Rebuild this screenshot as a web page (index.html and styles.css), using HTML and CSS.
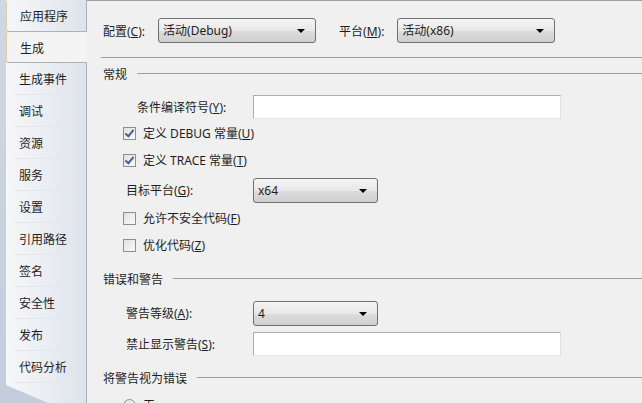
FILE: index.html
```html
<!DOCTYPE html>
<html lang="zh-CN">
<head>
  <meta charset="UTF-8" />
  <title>项目属性</title>
  <link rel="stylesheet" href="styles.css">
</head>
<body>
  <div class="sidebar">
    <ul class="tabs">
      <li class="tab">应用程序</li>
      <li class="tab active">生成</li>
      <li class="tab">生成事件</li>
      <li class="tab">调试</li>
      <li class="tab">资源</li>
      <li class="tab">服务</li>
      <li class="tab">设置</li>
      <li class="tab">引用路径</li>
      <li class="tab">签名</li>
      <li class="tab">安全性</li>
      <li class="tab">发布</li>
      <li class="tab">代码分析</li>
    </ul>
  </div>

  <div class="content">
    <div class="config-row">
      <span class="label">配置(<u>C</u>):</span>
      <div class="select wide">活动(Debug)<span class="arrow"></span></div>
      <span class="label platform">平台(<u>M</u>):</span>
      <div class="select wide">活动(x86)<span class="arrow"></span></div>
    </div>
    <div class="rule"></div>

    <div class="group-title"><span>常规</span><div class="line"></div></div>
    <div class="field">
      <span class="field-label indent-lg">条件编译符号(<u>Y</u>):</span>
      <div class="textbox"></div>
    </div>
    <label class="check"><span class="box checked"></span>定义 DEBUG 常量(<u>U</u>)</label>
    <label class="check"><span class="box checked"></span>定义 TRACE 常量(<u>T</u>)</label>
    <div class="field">
      <span class="field-label">目标平台(<u>G</u>):</span>
      <div class="select short">x64<span class="arrow"></span></div>
    </div>
    <label class="check"><span class="box"></span>允许不安全代码(<u>F</u>)</label>
    <label class="check"><span class="box"></span>优化代码(<u>Z</u>)</label>

    <div class="group-title"><span>错误和警告</span><div class="line"></div></div>
    <div class="field">
      <span class="field-label">警告等级(<u>A</u>):</span>
      <div class="select short">4<span class="arrow"></span></div>
    </div>
    <div class="field">
      <span class="field-label">禁止显示警告(<u>S</u>):</span>
      <div class="textbox"></div>
    </div>

    <div class="group-title"><span>将警告视为错误</span><div class="line"></div></div>
    <label class="check"><span class="box radio"></span>无</label>
  </div>
</body>
</html>
```

FILE: styles.css
```css
body {
  margin: 0;
  height: 403px;
  overflow: hidden;
  display: flex;
  font-family: "Noto Sans", "Noto Sans CJK SC", sans-serif;
  font-size: 12px;
  color: #1e1e1e;
  background: #f0f0f0;
}

.sidebar {
  width: 87px;
  flex: none;
  background: linear-gradient(to bottom, #cfd7e3, #c3cddb);
  padding-left: 6px;
  box-sizing: border-box;
}

.tabs {
  list-style: none;
  margin: 0;
  padding: 0 0 30px;
  width: 81px;
  height: 100%;
  box-sizing: border-box;
  background: linear-gradient(to right, #f6f7f9, #dee3eb);
  border-right: 1px solid #a9b1bf;
  clip-path: polygon(0 0, 100% 0, 100% 100%, 42px 100%, 0 calc(100% - 18px));
}

.tab {
  height: 32px;
  line-height: 28px;
  padding: 3px 0 0 13px;
  box-sizing: border-box;
  position: relative;
}

.tab::after {
  content: "";
  position: absolute;
  left: 8px;
  right: 12px;
  bottom: 0;
  border-bottom: 1px solid #e3e6eb;
}

.tab:first-child {
  border-left: 1px solid #e2cfa6;
  border-bottom: 1px solid #a9b1bf;
  border-radius: 3px 0 0 3px;
  line-height: 27px;
}

.tab:first-child::after,
.tab.active::after {
  display: none;
}

.tab.active {
  background: #f4f4f4;
  border: 1px solid #a9b1bf;
  border-left-color: #e2cfa6;
  border-right: none;
  border-radius: 3px 0 0 3px;
  margin-right: -2px;
  margin-top: -1px;
  height: 32px;
  line-height: 27px;
}

.content {
  flex: 1;
  border-top: 1px solid #a0a0a0;
  padding: 17px 0 0 16px;
  box-sizing: border-box;
}

.config-row {
  display: flex;
  align-items: center;
  height: 25px;
}

.label {
  margin-right: 13px;
}

.label.platform {
  margin-left: 23px;
}

.select {
  position: relative;
  height: 25px;
  box-sizing: border-box;
  border: 1px solid #707070;
  border-radius: 3px;
  background: linear-gradient(to bottom, #f4f4f4, #e8e8e8 50%, #dddddd 51%, #cfcfcf);
  padding-left: 4px;
  line-height: 23px;
}

.select.wide {
  width: 158px;
}

.select.short {
  width: 125px;
}

.arrow {
  position: absolute;
  right: 10px;
  top: 10px;
  border-left: 4px solid transparent;
  border-right: 4px solid transparent;
  border-top: 4px solid #000;
}

.rule {
  margin: 14px 0 0 -2px;
  border-top: 1px solid #a0a0a0;
}

.group-title {
  display: flex;
  align-items: center;
  height: 17px;
  margin-top: 7px;
}

.field + .group-title {
  margin-top: 13px;
}

.check + .group-title {
  margin-top: 15px;
}

.group-title .line {
  flex: 1;
  margin-left: 10px;
  border-top: 1px solid #a0a0a0;
}

.field {
  display: flex;
  align-items: center;
  height: 24px;
  margin-top: 7px;
}

.group-title + .field {
  margin-top: 13px;
}

.check + .group-title + .field {
  margin-top: 14px;
}

.check + .field {
  margin-top: 8px;
}

.field-label {
  width: 127px;
  padding-left: 23px;
  flex: none;
}

.field-label.indent-lg {
  padding-left: 34px;
  width: 116px;
}

.textbox {
  width: 308px;
  height: 24px;
  box-sizing: border-box;
  background: #fff;
  border: 1px solid #abadb3;
  border-right-color: #dbdfe6;
  border-bottom-color: #e3e9ef;
}

.check {
  display: flex;
  align-items: center;
  height: 20px;
  margin-top: 7px;
  padding-left: 20px;
}

.box {
  width: 13px;
  height: 13px;
  box-sizing: border-box;
  border: 1px solid #8e8f8f;
  background: linear-gradient(135deg, #e0e0e0, #fbfbfb);
  margin-right: 7px;
  position: relative;
}

.box.checked::after {
  content: "";
  position: absolute;
  left: 3px;
  top: 0px;
  width: 3px;
  height: 7px;
  border-right: 2px solid #4a5f97;
  border-bottom: 2px solid #4a5f97;
  transform: rotate(40deg);
}

.box.radio {
  border-radius: 50%;
}

.field + .check {
  margin-top: 4px;
}

.check + .field + .check {
  margin-top: 6px;
}

.group-title + .check {
  margin-top: 9px;
}
```
